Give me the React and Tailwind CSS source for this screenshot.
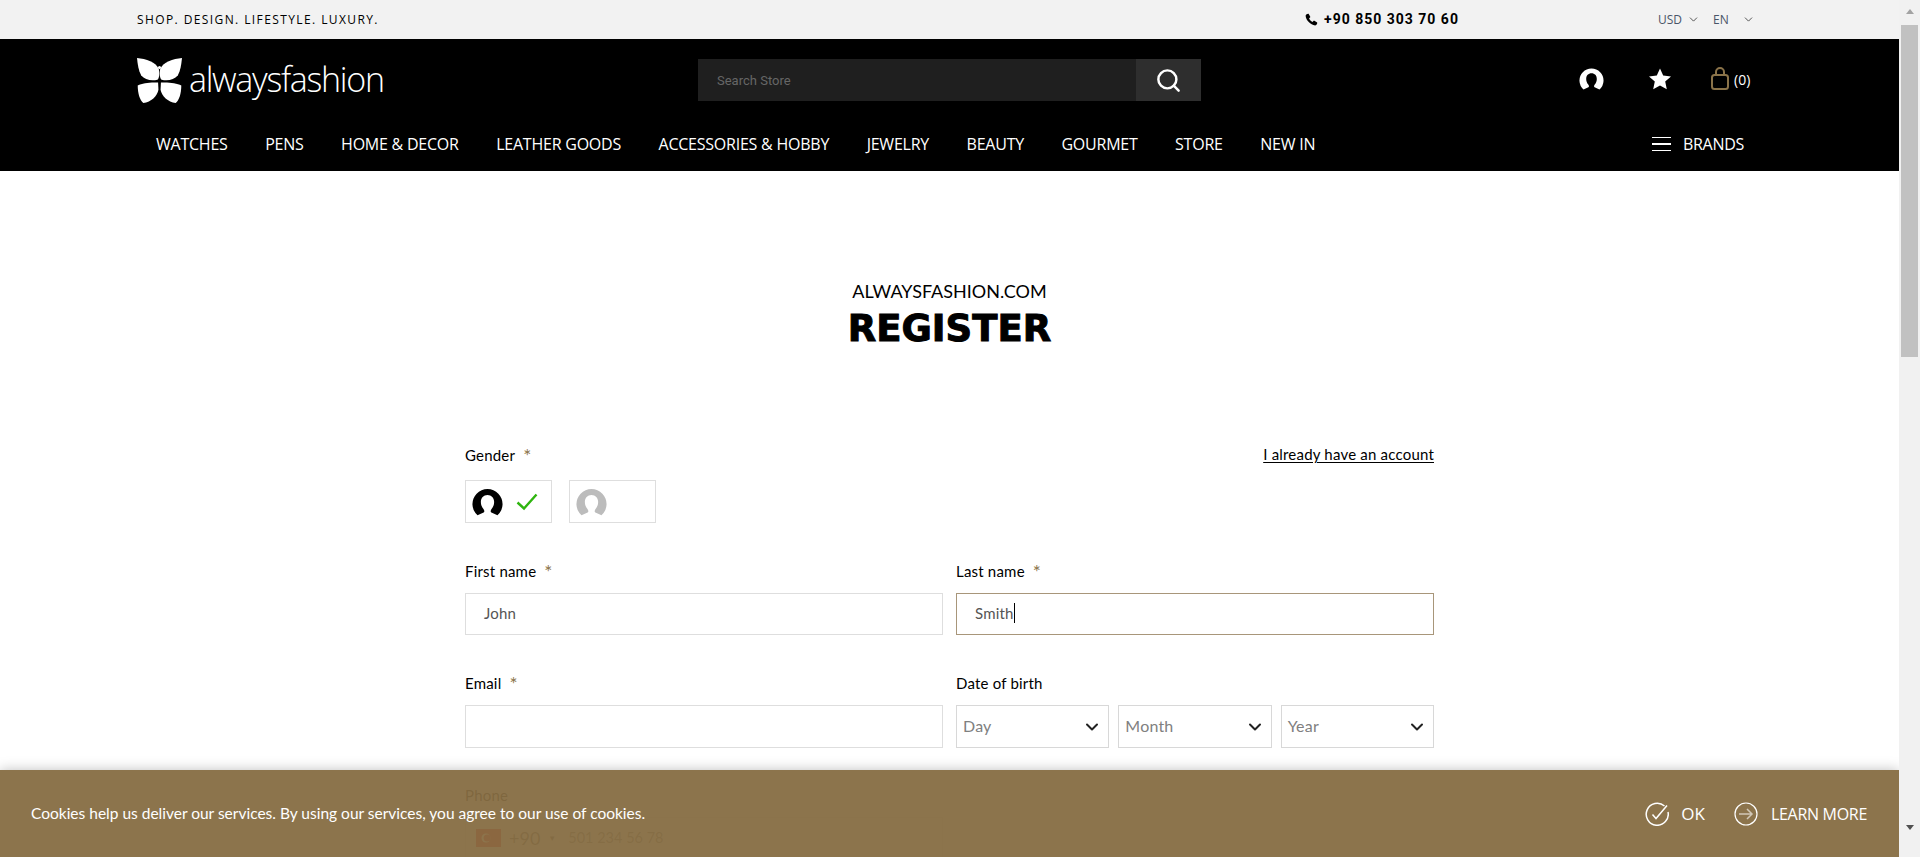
import { ChevronDown, Search } from 'lucide-react'

const formFont = "font-['Lato',sans-serif]"

function Avatar({ color }) {
  return (
    <svg width="31" height="29" viewBox="0 0 28 26" className={color}>
      <path
        fill="currentColor"
        d="M5 25.500A13.600 13.600 0 1 1 23 25.500L17.500 23C16.500 22.500 16.800 21 17.500 20C19.200 18 20 16 20 13.500C20 9.800 17.600 7.200 14 7.200C10.400 7.200 8 9.800 8 13.500C8 16 8.800 18 10.500 20C11.200 21 11.500 22.500 10.500 23Z"
      />
    </svg>
  )
}

function Butterfly() {
  const wing = (
    <>
      <path d="M0 0C25 2 55 12 62 32C65 45 63 58 58 62C40 66 22 62 12 50C4 35 2 18 0 0Z" />
      <path d="M60 70C40 68 15 72 2 78C2 100 8 120 18 128C40 125 58 108 61 90Z" />
    </>
  )
  return (
    <svg width="45" height="45" viewBox="0 0 128 128" fill="currentColor" className="text-white shrink-0">
      {wing}
      <g transform="translate(128 0) scale(-1 1)">{wing}</g>
      <circle cx="64" cy="27" r="4.500" />
    </svg>
  )
}

function Label({ text, required }) {
  return (
    <div className={`h-5 leading-[18px] text-[15px] text-black tracking-[0.2px] ${formFont}`}>
      {text}
      {required && <span className="ml-2 text-[19px] leading-[0] align-[-2px] text-[#8b7349]">*</span>}
    </div>
  )
}

function TextField({ label, required, value, active, tall }) {
  return (
    <div>
      <Label text={label} required={required} />
      <div className={`mt-[11px] ${tall ? 'h-[43px]' : 'h-[42px]'} flex items-center pl-[18px] pb-[2px] border text-[15px] text-[#555] tracking-[0.2px] ${formFont} ${active ? 'border-[#a8967a]' : 'border-[#dedede]'}`}>
        {value}
        {active && <span className="w-px h-5 bg-black" />}
      </div>
    </div>
  )
}

function DateSelect({ text }) {
  return (
    <div className={`flex-1 h-[43px] flex items-center justify-between pl-[6px] pr-[6px] border border-[#d8d8d8] text-[16px] text-[#808080] tracking-[0.2px] ${formFont}`}>
      <span className="pb-[2px]">{text}</span>
      <ChevronDown size={20} strokeWidth={2.4} className="text-[#222]" />
    </div>
  )
}

function GenderBox({ children }) {
  return (
    <div className="w-[87px] h-[43px] flex items-center gap-[13px] pl-[6px] border border-[#dedede]">
      {children}
    </div>
  )
}

const navItems = ['WATCHES', 'PENS', 'HOME & DECOR', 'LEATHER GOODS', 'ACCESSORIES & HOBBY', 'JEWELRY', 'BEAUTY', 'GOURMET', 'STORE', 'NEW IN']

export default function App() {
  return (
    <div className="flex h-[857px] overflow-hidden bg-white">
      <div className="relative w-[1899px] shrink-0 overflow-hidden">
        {/* Top bar */}
        <div className="h-[39px] bg-[#f2f2f2] flex items-center pl-[137px]">
          <div className="w-[1168px] text-[12px] tracking-[1.4px] text-black font-['Open_Sans',sans-serif]">SHOP. DESIGN. LIFESTYLE. LUXURY.</div>
          <svg width="13" height="13" viewBox="0 0 24 24" className="text-black">
            <path fill="currentColor" d="M6.600 1.500 10 7.500 7.500 10.200c1.200 2.800 3.500 5.100 6.300 6.300l2.700-2.500 6 3.400c.4 2.200-.8 4.800-3.800 5.500C10 22 2 14 1.100 5.300 1.800 2.300 4.400 1.100 6.600 1.500z" />
          </svg>
          <div className="ml-[6px] w-[334px] text-[14px] font-bold tracking-[1px] text-black font-['Roboto',sans-serif]">+90 850 303 70 60</div>
          <div className="flex items-center text-[12px] text-[#4a5568] font-['Open_Sans',sans-serif]">
            USD
            <ChevronDown size={13} strokeWidth={1.5} className="ml-[5px] text-[#333]" />
            <span className="ml-[13px]">EN</span>
            <ChevronDown size={13} strokeWidth={1.5} className="ml-[13px] text-[#333]" />
          </div>
        </div>

        {/* Header */}
        <div className="h-[132px] bg-black pl-[137px]">
          <div className="h-[82px] flex items-center">
            <Butterfly />
            <div className="ml-[7px] pb-[2px] w-[509px] text-[34px] font-light tracking-[-1.3px] leading-none text-white font-['Open_Sans',sans-serif]">alwaysfashion</div>
            <div className="w-[503px] h-[42px] flex bg-[#1f1f1f]">
              <div className="flex-1 flex items-center pl-[19px] pt-[2px] text-[13px] text-[#666] font-['Roboto',sans-serif]">Search Store</div>
              <div className="w-[65px] bg-[#2e2e2e] flex items-center justify-center">
                <Search size={27} strokeWidth={2.2} className="text-white" />
              </div>
            </div>
            <div className="ml-[378px] flex items-center">
              <Avatar color="text-white w-[25px] h-[23px] mb-[4px]" />
              <svg width="24" height="24" viewBox="0 0 24 24" className="ml-[44px] mb-[3px] text-white">
                <path fill="currentColor" d="M12 1.500l3.200 7 7.800.9-5.800 5.200 1.600 7.700L12 18.400l-6.800 3.900 1.600-7.700L1 9.400l7.800-.9z" />
              </svg>
              <svg width="18" height="23" viewBox="0 0 18 23" fill="none" className="ml-[39px] mb-[3px] text-[#8b7349]" stroke="currentColor" strokeWidth="2">
                <path d="M5 9V5a4 4 0 0 1 8 0v4" />
                <rect x="1" y="8" width="16" height="14" rx="2.500" />
              </svg>
              <span className="ml-[5px] pb-[2px] text-[14px] text-white font-['Open_Sans',sans-serif]">(0)</span>
            </div>
          </div>
          <div className="pt-[11px] flex items-start pl-[19px] text-white">
            <div className="w-[1496px] flex gap-[37.500px] text-[16px] tracking-[-0.23px] leading-[24px] font-['Open_Sans',sans-serif]">
              {navItems.map(item => <span key={item}>{item}</span>)}
            </div>
            <div className="flex items-center h-[24px] font-['Open_Sans',sans-serif] text-[16px] tracking-[-0.3px]">
              <div className="w-[19px] flex flex-col gap-[5px]">
                <div className="h-[1.5px] bg-white" />
                <div className="h-[1.5px] bg-white" />
                <div className="h-[1.5px] bg-white" />
              </div>
              <span className="ml-[12px]">BRANDS</span>
            </div>
          </div>
        </div>

        {/* Title */}
        <div className="mt-[108px] text-center text-black">
          <div className={`text-[18px] leading-6 ${formFont}`}>ALWAYSFASHION.COM</div>
          <div className="mt-[6px] text-[37px] leading-10 font-bold font-['DejaVu_Sans',sans-serif] [-webkit-text-stroke:1px_black]">REGISTER</div>
        </div>

        {/* Form */}
        <div className="mt-[97px] ml-[465px] w-[969px]">
          <div className="flex justify-between">
            <Label text="Gender" required />
            <a className={`text-[15px] leading-[17px] text-black underline underline-offset-2 tracking-[0.2px] ${formFont}`}>I already have an account</a>
          </div>
          <div className="mt-[14px] flex gap-[17px]">
            <GenderBox>
              <Avatar color="text-black" />
              <svg width="22" height="18" viewBox="0 0 22 18" fill="none" stroke="#2fb50f" strokeWidth="2.400">
                <path d="M1.500 9.500 8 15.500 20.500 1.500" />
              </svg>
            </GenderBox>
            <GenderBox>
              <Avatar color="text-[#bcbcbc]" />
            </GenderBox>
          </div>

          <div className="mt-[39px] grid grid-cols-2 gap-x-[13px]">
            <TextField label="First name" required value="John" />
            <TextField label="Last name" required value="Smith" active />
          </div>

          <div className="mt-[39px] grid grid-cols-2 gap-x-[13px]">
            <TextField label="Email" required value="" tall />
            <div>
              <Label text="Date of birth" />
              <div className="mt-[11px] flex gap-[9px]">
                <DateSelect text="Day" />
                <DateSelect text="Month" />
                <DateSelect text="Year" />
              </div>
            </div>
          </div>

          <div className="mt-[38px] grid grid-cols-2 gap-x-[13px]">
            <div>
              <Label text="Phone" />
              <div className={`mt-[11px] h-[42px] flex items-center pl-[10px] border border-[#dedede] ${formFont}`}>
                <svg width="25" height="18" viewBox="0 0 25 18" className="shrink-0">
                  <rect width="25" height="18" fill="#e30a17" />
                  <circle cx="10" cy="9" r="4.500" fill="#fff" />
                  <circle cx="11.200" cy="9" r="3.600" fill="#e30a17" />
                </svg>
                <span className="ml-2 text-[18px] text-[#555]">+90</span>
                <span className="ml-2 text-[8px] text-[#555]">▼</span>
                <span className="ml-[12px] text-[14.500px] text-[#777]">501 234 56 78</span>
              </div>
            </div>
          </div>
        </div>

        {/* Cookie bar */}
        <div className="absolute left-0 right-0 bottom-0 h-[87px] bg-[#866d42]/95 shadow-[0_0_12px_rgba(0,0,0,0.25)] flex items-center pl-[31px] pr-[32px] text-white">
          <div className={`flex-1 text-[15.500px] ${formFont}`}>Cookies help us deliver our services. By using our services, you agree to our use of cookies.</div>
          <svg width="24" height="24" viewBox="0 0 24 24" fill="none" stroke="currentColor" strokeWidth="1.500">
            <path d="M19.500 4A11 11 0 1 0 23 10" />
            <path d="M7.500 12.500l3.500 4L22 3.500" />
          </svg>
          <span className="ml-[12px] text-[17px] font-['Open_Sans',sans-serif]">OK</span>
          <svg width="24" height="24" viewBox="0 0 24 24" fill="none" stroke="currentColor" strokeWidth="1.200" className="ml-[29px]">
            <circle cx="12" cy="12" r="11" />
            <path d="M5 12h13M13 7l5 5-5 5" strokeOpacity="0.6" strokeWidth="1.500" />
          </svg>
          <span className="ml-[13px] text-[16px] tracking-[-0.3px] font-['Open_Sans',sans-serif]">LEARN MORE</span>
        </div>
      </div>

      {/* Scrollbar */}
      <div className="w-[21px] shrink-0 bg-[#f1f1f1] flex flex-col items-center pt-[9px]">
        <div className="w-0 h-0 border-x-[4px] border-x-transparent border-b-[5px] border-b-[#a3a3a3]" />
        <div className="mt-[11px] w-[17px] h-[332px] bg-[#c1c1c1]" />
        <div className="mt-[468px] w-0 h-0 border-x-[4px] border-x-transparent border-t-[5px] border-t-[#505050]" />
      </div>
    </div>
  )
}
